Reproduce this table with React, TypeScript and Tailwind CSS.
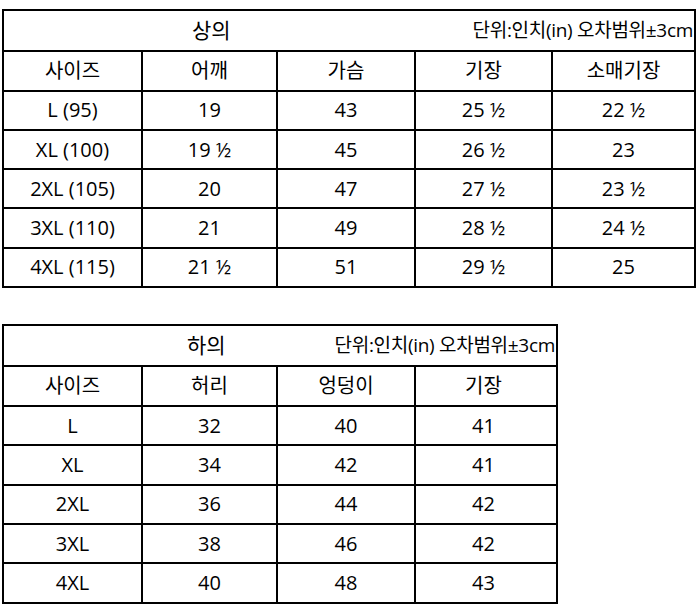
const FONT = "font-['Open_Sans','Noto_Sans_CJK_KR',sans-serif]";

const TOP_COLS = ["w-[137px]", "w-[135px]", "w-[138px]", "w-[137px]", "flex-1"];

const topRows = [
  ["사이즈", "어깨", "가슴", "기장", "소매기장"],
  ["L (95)", "19", "43", "25 ½", "22 ½"],
  ["XL (100)", "19 ½", "45", "26 ½", "23"],
  ["2XL (105)", "20", "47", "27 ½", "23 ½"],
  ["3XL (110)", "21", "49", "28 ½", "24 ½"],
  ["4XL (115)", "21 ½", "51", "29 ½", "25"],
];

const bottomRows = [
  ["사이즈", "허리", "엉덩이", "기장"],
  ["L", "32", "40", "41"],
  ["XL", "34", "42", "41"],
  ["2XL", "36", "44", "42"],
  ["3XL", "38", "46", "42"],
  ["4XL", "40", "48", "43"],
];

function SizeTable({
  title,
  rows,
  widthClass,
  titleOffset,
  rowHeight,
}: {
  title: string;
  rows: string[][];
  widthClass: string;
  titleOffset: string;
  rowHeight: string;
}) {
  return (
    <div className={`${widthClass} border-2 border-black bg-white`}>
      {/* title row */}
      <div className={`${rowHeight} flex items-center`}>
        <span className={`${titleOffset} text-[21px] leading-none`}>{title}</span>
        <span className="ml-auto pr-[1px] text-[19px] leading-none whitespace-nowrap tracking-[-0.3px]">
          단위:인치(in) 오차범위±3cm
        </span>
      </div>
      {rows.map((row, i) => (
        <div key={i} className={`${rowHeight} flex border-t-2 border-black`}>
          {row.map((cell, j) => (
            <div
              key={j}
              className={`${TOP_COLS[j]} ${
                j > 0 ? "border-l-2 border-black" : ""
              } text-[20px] flex items-center justify-center leading-none`}
            >
              {cell}
            </div>
          ))}
        </div>
      ))}
    </div>
  );
}

export default function App() {
  return (
    <div className={`${FONT} w-[700px] h-[605px] bg-white text-black pl-[2px] pt-[9px] overflow-hidden`}>
      <SizeTable
        title="상의"
        rows={topRows}
        widthClass="w-[694px]"
        titleOffset="ml-[188px]"
        rowHeight="h-[39.3px]"
      />
      <div className="h-[36px]" />
      <SizeTable
        title="하의"
        rows={bottomRows}
        widthClass="w-[556px]"
        titleOffset="ml-[183px]"
        rowHeight="h-[39.4px]"
      />
    </div>
  );
}
